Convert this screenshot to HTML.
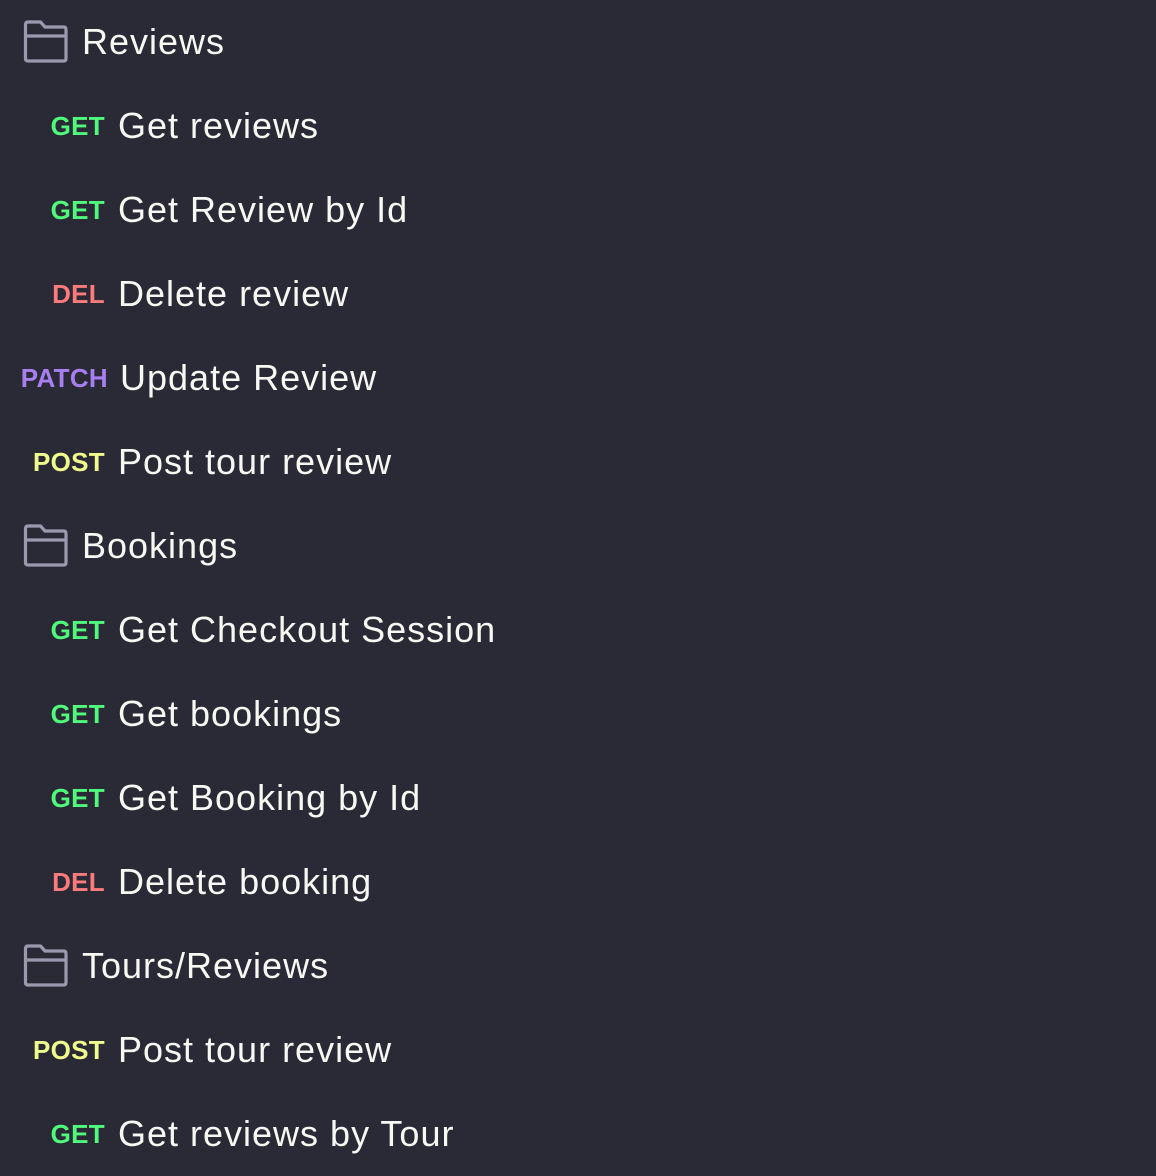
<!DOCTYPE html>
<html><head><style>
html,body{margin:0;padding:0;background:#2a2a37;width:1156px;height:1172px;overflow:hidden}
.r{position:absolute;left:0;height:84px;width:1156px;font-family:"Liberation Sans",sans-serif}
.m{position:absolute;right:1051px;top:0;line-height:84px;font-size:26px;font-weight:bold;text-align:right;letter-spacing:0.3px}
.t{position:absolute;left:118px;top:0;line-height:84px;font-size:36px;color:#f8f8f2;letter-spacing:1px;white-space:nowrap}
.f .t{left:82px}
svg{position:absolute;left:22px;top:19px}
.g{color:#50fa7b}.d{color:#ff7b7b}.p{color:#a87ff0}.o{color:#f1fa8c}
</style></head><body>
<div class="r f" style="top:0"><svg width="46" height="46" viewBox="0 0 46 46"><path d="M3.5 6 Q3.5 3 6 3 H18.5 L23 8 H41.5 Q44 8 44 10.5 V39.5 Q44 42 41.5 42 H6 Q3.5 42 3.5 39.5 Z M3.5 17 H44" fill="none" stroke="#9a9aae" stroke-width="3.2" stroke-linejoin="round"/></svg><span class="t">Reviews</span></div>
<div class="r" style="top:84px"><span class="m g">GET</span><span class="t">Get reviews</span></div>
<div class="r" style="top:168px"><span class="m g">GET</span><span class="t">Get Review by Id</span></div>
<div class="r" style="top:252px"><span class="m d">DEL</span><span class="t">Delete review</span></div>
<div class="r" style="top:336px"><span class="m p" style="right:1048px">PATCH</span><span class="t" style="left:120px">Update Review</span></div>
<div class="r" style="top:420px"><span class="m o">POST</span><span class="t">Post tour review</span></div>
<div class="r f" style="top:504px"><svg width="46" height="46" viewBox="0 0 46 46"><path d="M3.5 6 Q3.5 3 6 3 H18.5 L23 8 H41.5 Q44 8 44 10.5 V39.5 Q44 42 41.5 42 H6 Q3.5 42 3.5 39.5 Z M3.5 17 H44" fill="none" stroke="#9a9aae" stroke-width="3.2" stroke-linejoin="round"/></svg><span class="t">Bookings</span></div>
<div class="r" style="top:588px"><span class="m g">GET</span><span class="t">Get Checkout Session</span></div>
<div class="r" style="top:672px"><span class="m g">GET</span><span class="t">Get bookings</span></div>
<div class="r" style="top:756px"><span class="m g">GET</span><span class="t">Get Booking by Id</span></div>
<div class="r" style="top:840px"><span class="m d">DEL</span><span class="t">Delete booking</span></div>
<div class="r f" style="top:924px"><svg width="46" height="46" viewBox="0 0 46 46"><path d="M3.5 6 Q3.5 3 6 3 H18.5 L23 8 H41.5 Q44 8 44 10.5 V39.5 Q44 42 41.5 42 H6 Q3.5 42 3.5 39.5 Z M3.5 17 H44" fill="none" stroke="#9a9aae" stroke-width="3.2" stroke-linejoin="round"/></svg><span class="t">Tours/Reviews</span></div>
<div class="r" style="top:1008px"><span class="m o">POST</span><span class="t">Post tour review</span></div>
<div class="r" style="top:1092px"><span class="m g">GET</span><span class="t">Get reviews by Tour</span></div>
</body></html>
